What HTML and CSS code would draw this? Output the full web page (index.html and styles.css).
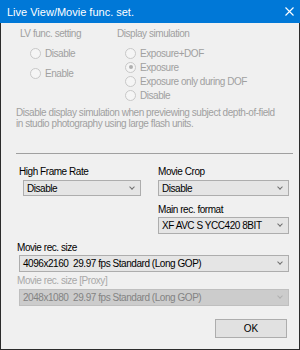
FILE: index.html
```html
<!DOCTYPE html>
<html lang="en">
<head>
    <meta charset="UTF-8">
    <title>Live View/Movie func. set.</title>
    <link rel="stylesheet" href="styles.css">
</head>
<body>
    <div class="window">
        <div class="titlebar">
            <span class="title">Live View/Movie func. set.</span>
            <svg class="close" width="9" height="9" viewBox="0 0 9 9"><path d="M0.5 0.5 L8.5 8.5 M8.5 0.5 L0.5 8.5" stroke="#fff" stroke-width="1.1"/></svg>
        </div>
        <div class="content">
            <div class="lv-group">
                <div class="col lv-col">
                    <div class="group-title">LV func. setting</div>
                    <label class="radio"><span class="circle"></span>Disable</label>
                    <label class="radio"><span class="circle"></span>Enable</label>
                </div>
                <div class="col sim-col">
                    <div class="group-title">Display simulation</div>
                    <label class="radio"><span class="circle"></span>Exposure+DOF</label>
                    <label class="radio"><span class="circle checked"></span>Exposure</label>
                    <label class="radio"><span class="circle"></span>Exposure only during DOF</label>
                    <label class="radio"><span class="circle"></span>Disable</label>
                </div>
            </div>
            <p class="note">Disable display simulation when previewing subject depth-of-field<br>in studio photography using large flash units.</p>
            <hr class="sep">
            <div class="grid">
                <div class="field hfr">
                    <label>High Frame Rate</label>
                    <div class="select short">Disable<span class="chev"></span></div>
                </div>
                <div class="field crop">
                    <label>Movie Crop</label>
                    <div class="select short">Disable<span class="chev"></span></div>
                    <label class="sub">Main rec. format</label>
                    <div class="select">XF AVC S YCC420 8BIT<span class="chev"></span></div>
                </div>
            </div>
            <div class="field wide">
                <label class="sub">Movie rec. size</label>
                <div class="select">4096x2160&nbsp; 29.97 fps Standard (Long GOP)<span class="chev"></span></div>
                <label class="sub proxy disabled">Movie rec. size [Proxy]</label>
                <div class="select disabled">2048x1080&nbsp; 29.97 fps Standard (Long GOP)<span class="chev"></span></div>
            </div>
            <div class="buttons">
                <button class="ok">OK</button>
            </div>
        </div>
    </div>
</body>
</html>
```
FILE: styles.css
```css
* { box-sizing: border-box; }
body {
    margin: 0;
    font-family: 'Liberation Sans', Arial, sans-serif;
    font-size: 10px;
    letter-spacing: -0.45px;
    color: #000;
    background: #f0f0f0;
}
.window {
    width: 300px;
    height: 350px;
    border: 1px solid #2b2b2b;
    border-top: none;
    background: #f0f0f0;
    display: flex;
    flex-direction: column;
}
.titlebar {
    flex-shrink: 0;
    height: 23px;
    margin: 0 -1px;
    background: #0078d7;
    color: #fff;
    display: flex;
    align-items: center;
    justify-content: space-between;
    padding: 0 6px 0 7px;
    font-size: 11px;
    letter-spacing: 0;
}
.content {
    padding: 5px 0 0 15px;
    flex: 1;
    display: flex;
    flex-direction: column;
}
.lv-group {
    display: flex;
    color: #a0a0a0;
}
.col { display: flex; flex-direction: column; }
.lv-col { width: 101px; padding-left: 4px; }
.group-title { height: 12px; line-height: 12px; }
.radio {
    display: flex;
    align-items: center;
    gap: 4px;
    height: 14px;
}
.lv-col .radio { margin: 6px 0 0 10px; }
.sim-col .radio { margin-left: 8px; }
.sim-col .group-title { margin-bottom: 6px; }
.circle {
    width: 11px;
    height: 11px;
    border-radius: 50%;
    border: 1px solid #c8c8c8;
    background: #f5f5f5;
    position: relative;
}
.circle.checked::after {
    content: "";
    position: absolute;
    left: 2.5px;
    top: 2.5px;
    width: 4px;
    height: 4px;
    border-radius: 50%;
    background: #b0b0b0;
}
.note {
    color: #a0a0a0;
    margin: 5px 0 0 0;
    line-height: 11px;
}
.sep {
    border: none;
    border-top: 1px solid #a0a0a0;
    margin: 24px 0 0 0;
    width: 277px;
    height: 0;
}
.grid {
    display: grid;
    grid-template-columns: 142px 131px;
    margin-top: 12px;
}
.field { display: flex; flex-direction: column; }
.field label { height: 12px; line-height: 12px; margin-bottom: 2px; }
.hfr { padding-left: 3px; }
.hfr .select { margin-left: 4px; width: 118px; }
.field .sub { margin-top: 8px; margin-bottom: 1px; }
.select {
    height: 17px;
    border: 1px solid #adadad;
    background: #e5e5e5;
    padding: 0 3px;
    display: flex;
    align-items: center;
    position: relative;
    white-space: pre;
}
.select.short { height: 16px; }
.chev {
    position: absolute;
    right: 6px;
    top: 4px;
    width: 4px;
    height: 4px;
    border-right: 1px solid #707070;
    border-bottom: 1px solid #707070;
    transform: rotate(45deg);
}
.wide { width: 273px; padding-left: 1px; }
.wide .select { margin-left: 2px; }
.wide .proxy { margin-top: 3px; margin-bottom: 2px; }
.field .disabled { color: #a8a8a8; }
.select.disabled {
    background: #cccccc;
    border-color: #bfbfbf;
    color: #838383;
}
.select.disabled .chev { border-color: #b0b0b0; }
.buttons {
    display: flex;
    justify-content: flex-end;
    margin-top: 13px;
    padding-right: 12px;
}
.ok {
    width: 72px;
    height: 19px;
    border: 1px solid #adadad;
    background: #e1e1e1;
    font-family: 'Liberation Sans', Arial, sans-serif;
    font-size: 10px;
    padding: 0;
    color: #000;
}
```
